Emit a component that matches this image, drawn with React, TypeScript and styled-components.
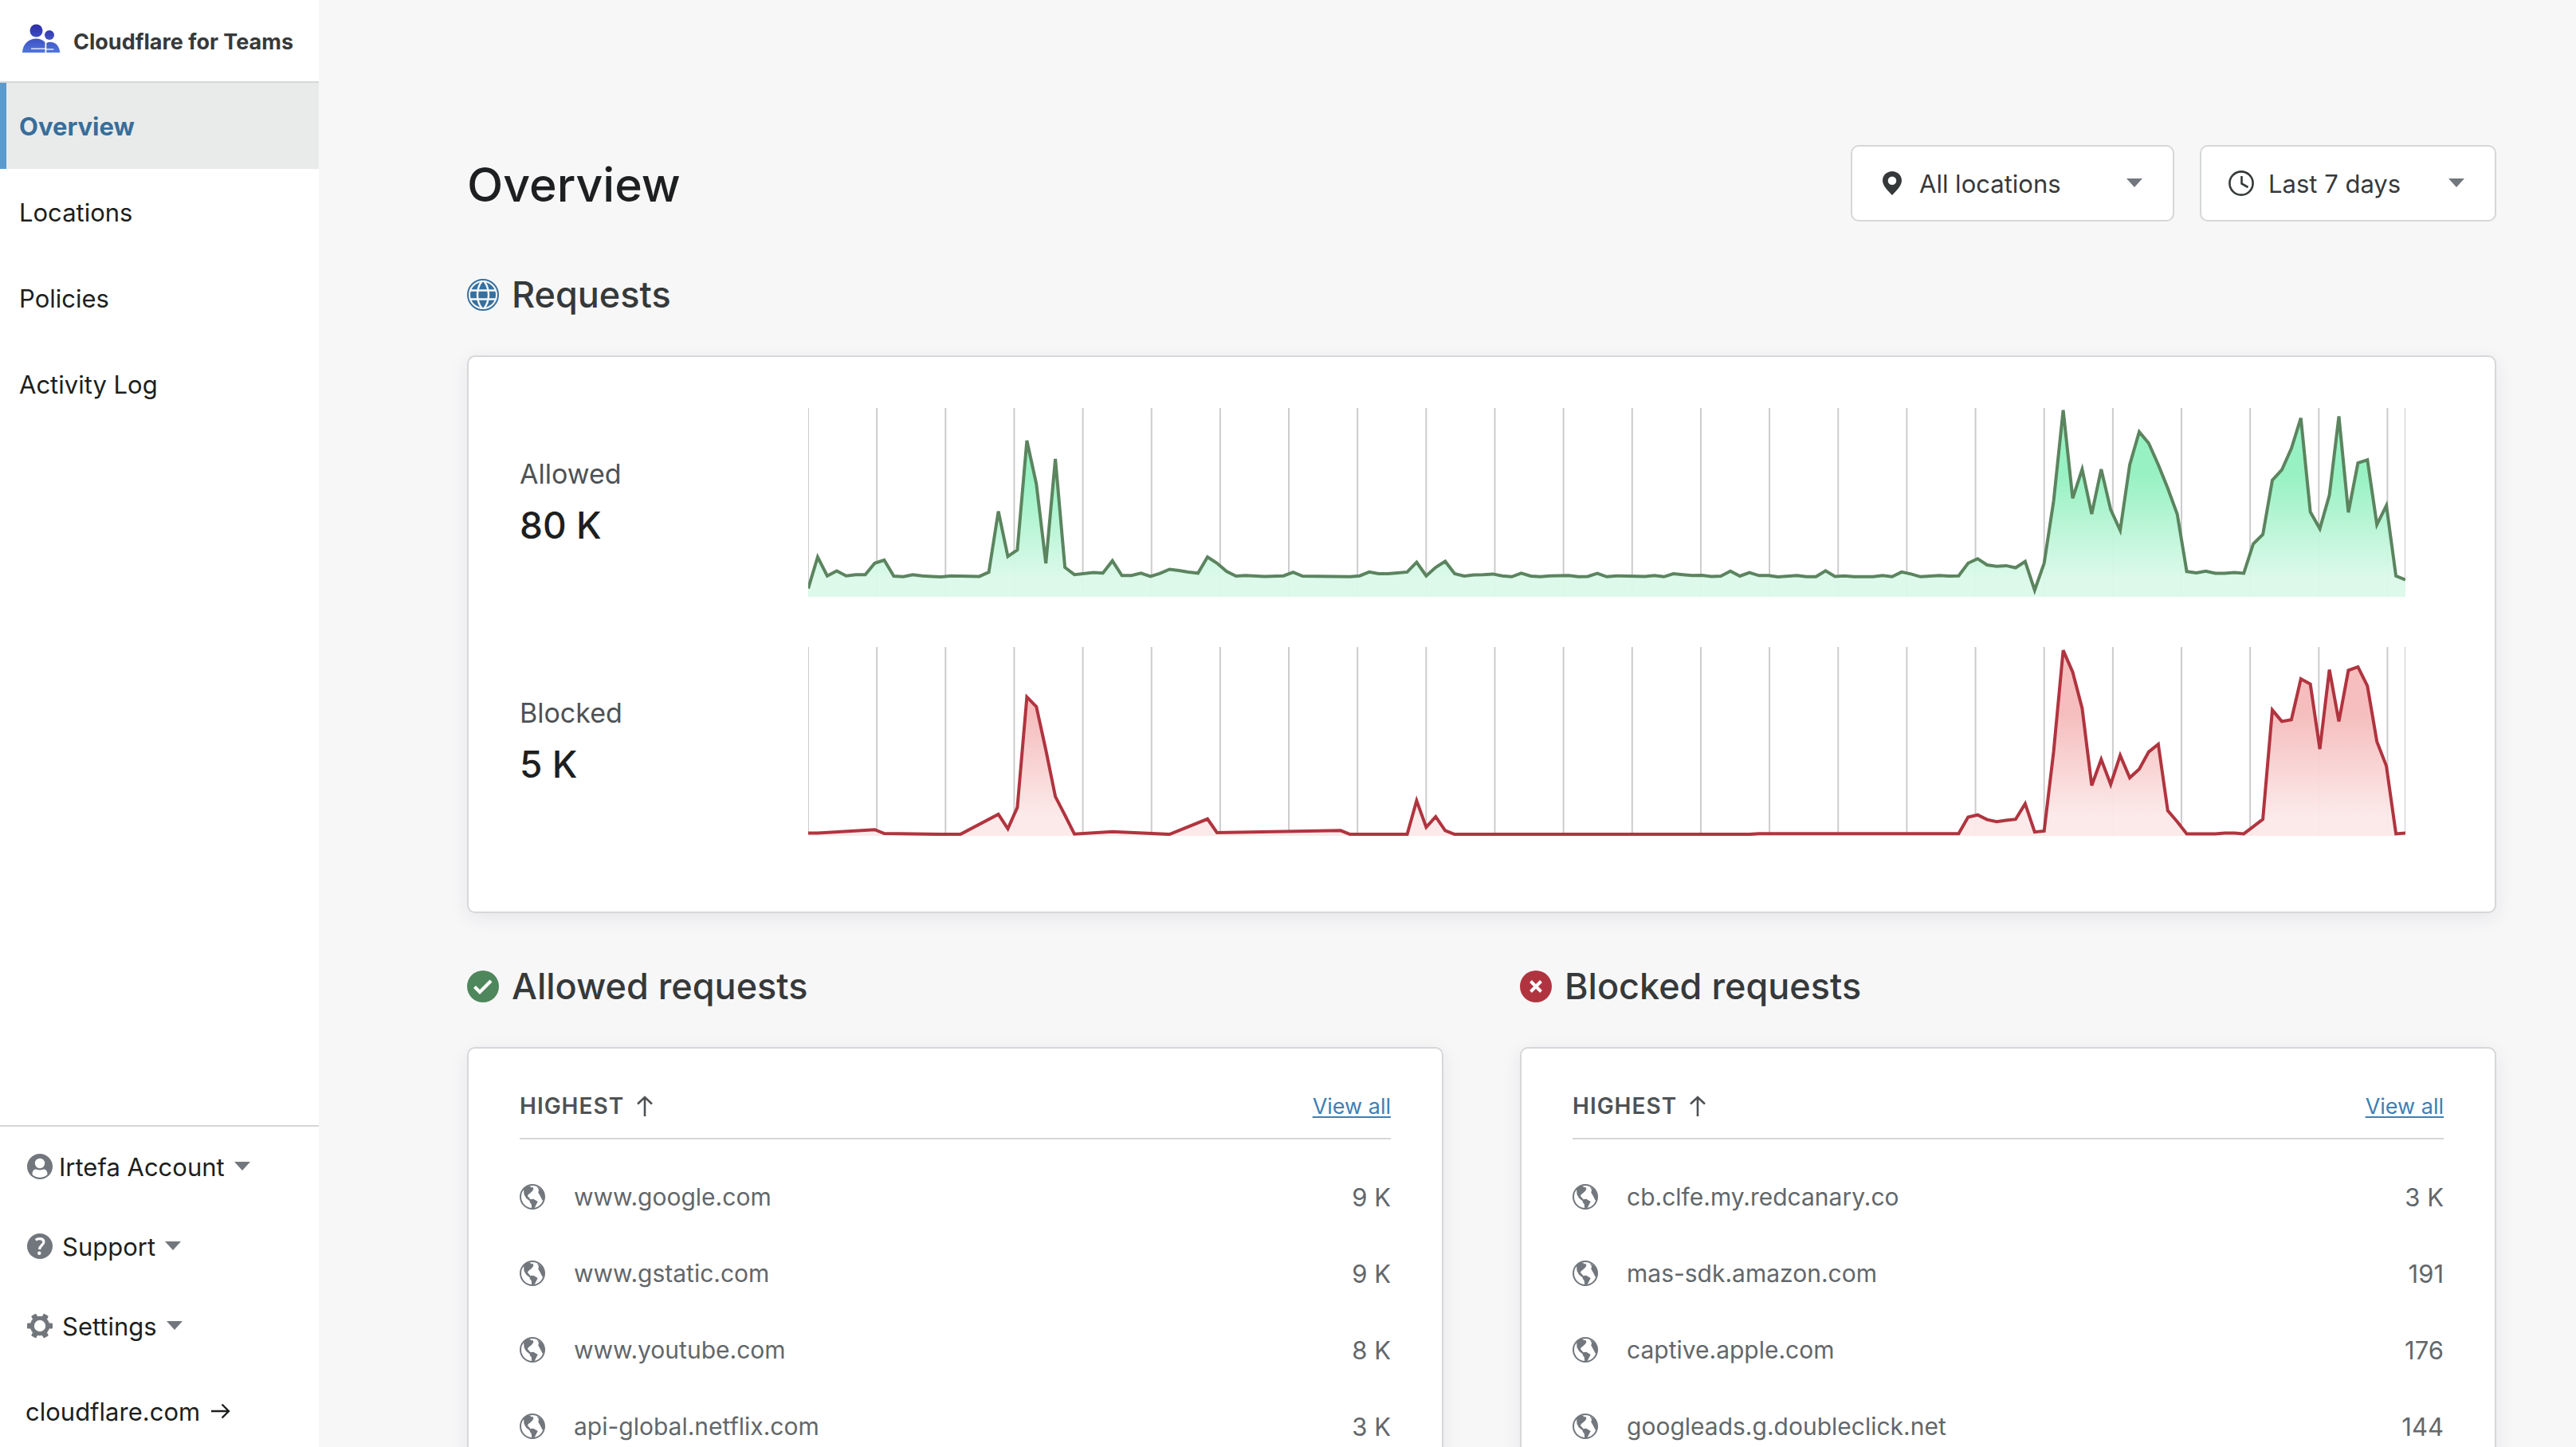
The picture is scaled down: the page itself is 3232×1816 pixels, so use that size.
import React from 'react';
import styled, { createGlobalStyle, css } from 'styled-components';

const color = {
  page: '#f7f7f8',
  panel: '#ffffff',
  line: '#d5d7d8',
  ink: '#1d1f20',
  heading: '#36393a',
  label: '#4e5255',
  muted: '#62676a',
  icon: '#72777d',
  link: '#3e7fb3',
  active: '#386e9b',
  activeBar: '#5b9acd',
  activeBg: '#e9ebea',
  globe: '#36709f',
  green: '#4f875c',
  red: '#b0343f',
};

const GlobalStyle = createGlobalStyle`
  *, *::before, *::after { box-sizing: border-box; }
  body {
    margin: 0;
    background: ${color.page};
    color: ${color.ink};
    font-family: Inter, "Noto Sans", "Liberation Sans", sans-serif;
    font-size: 31px;
  }
  button, select { font: inherit; color: inherit; }
`;

/* ---------- shell ---------- */

const Shell = styled.div`
  display: flex;
  height: 100vh;
  overflow: hidden;
`;

const Sidebar = styled.aside`
  display: flex;
  flex-direction: column;
  flex: 0 0 400px;
  background: ${color.panel};
`;

const Brand = styled.a`
  display: flex;
  align-items: center;
  gap: 16px;
  height: 104px;
  padding: 2px 28px 0;
  border-bottom: 2px solid ${color.line};
  color: ${color.heading};
  font-size: 27px;
  font-weight: 700;
  text-decoration: none;
  white-space: nowrap;
`;

const Nav = styled.nav`
  display: flex;
  flex-direction: column;
  flex: 1;
`;

const NavLink = styled.a<{ $active?: boolean }>`
  display: flex;
  align-items: center;
  height: 108px;
  padding: 0 16px;
  border-left: 8px solid transparent;
  color: ${color.ink};
  text-decoration: none;
  ${(p) =>
    p.$active &&
    css`
      background: ${color.activeBg};
      border-left-color: ${color.activeBar};
      color: ${color.active};
      font-weight: 700;
    `}
`;

const SidebarFooter = styled.div`
  display: flex;
  flex-direction: column;
  border-top: 2px solid ${color.line};
`;

const MenuButton = styled.button`
  display: flex;
  align-items: center;
  height: 100px;
  padding: 0 34px;
  border: 0;
  background: none;
  text-align: left;
`;

const MenuLabel = styled.span<{ $tight?: boolean }>`
  margin: 0 12px 0 ${(p) => (p.$tight ? 8 : 12)}px;
`;

const SiteLink = styled.a`
  display: flex;
  align-items: center;
  gap: 14px;
  height: 102px;
  padding: 12px 32px 0;
  color: ${color.ink};
  text-decoration: none;
`;

const Main = styled.main`
  flex: 1;
  min-width: 0;
  padding: 182px 100px 64px 186px;
  overflow-y: auto;
  scrollbar-width: none;
`;

/* ---------- page header ---------- */

const PageHeader = styled.header`
  display: flex;
  align-items: center;
  justify-content: space-between;
`;

const PageTitle = styled.h1`
  margin: 0;
  padding-top: 4px;
  font-size: 59px;
  line-height: 72px;
  font-weight: 500;
`;

const Filters = styled.div`
  display: flex;
  gap: 32px;
`;

const Filter = styled.label<{ $width: number }>`
  display: flex;
  align-items: center;
  gap: 18px;
  width: ${(p) => p.$width}px;
  height: 96px;
  padding: 0 38px 0 34px;
  background: ${color.panel};
  border: 2px solid ${color.line};
  border-radius: 10px;
  color: ${color.heading};
`;

const Select = styled.select`
  flex: 1;
  min-width: 0;
  padding: 0;
  border: 0;
  background: none;
  appearance: none;
`;

/* ---------- sections ---------- */

const SectionTitle = styled.h2`
  display: flex;
  align-items: center;
  gap: 16px;
  margin: 64px 0 48px;
  color: ${color.heading};
  font-size: 45px;
  line-height: 56px;
  font-weight: 500;
`;

const Card = styled.div`
  background: ${color.panel};
  border: 2px solid ${color.line};
  border-radius: 10px;
  box-shadow: 0 6px 24px rgba(40, 44, 70, 0.08);
`;

const ChartCard = styled(Card)`
  display: grid;
  gap: 63px;
  padding: 64px 112px 95px 64px;
`;

const ChartRow = styled.div`
  display: grid;
  grid-template-columns: 362px 1fr;
  align-items: center;
`;

const Metric = styled.dl`
  margin: 0;
`;

const MetricLabel = styled.dt`
  color: ${color.label};
  font-size: 34px;
  line-height: 56px;
`;

const MetricValue = styled.dd`
  margin: 0;
  font-size: 46px;
  line-height: 72px;
  font-weight: 500;
`;

const ChartSvg = styled.svg`
  display: block;
  width: 100%;
  height: 237px;
`;

const Columns = styled.div`
  display: grid;
  grid-template-columns: 1fr 1fr;
  gap: 96px;
`;

const ListCard = styled(Card)`
  padding: 32px 64px 40px;
`;

const Table = styled.table`
  width: 100%;
  border-collapse: separate;
  border-spacing: 0;
  color: ${color.muted};

  tbody::before {
    content: '';
    display: block;
    height: 24px;
  }
`;

const HeadCell = styled.th<{ $end?: boolean }>`
  height: 82px;
  padding: 0 0 ${(p) => (p.$end ? 4 : 0)}px;
  border-bottom: 2px solid ${color.line};
  text-align: ${(p) => (p.$end ? 'right' : 'left')};
  font-weight: 400;
`;

const SortButton = styled.button`
  display: flex;
  align-items: center;
  gap: 16px;
  padding: 0;
  border: 0;
  background: none;
  color: ${color.label};
  font-size: 28px;
  font-weight: 600;
  letter-spacing: 1px;
`;

const ViewAll = styled.a`
  color: ${color.link};
  font-size: 27px;
  text-decoration: underline;
  text-decoration-thickness: 2px;
  text-underline-offset: 3px;
`;

const Cell = styled.td<{ $end?: boolean }>`
  height: 96px;
  padding: 0;
  text-align: ${(p) => (p.$end ? 'right' : 'left')};
`;

const Domain = styled.span`
  display: flex;
  align-items: center;
  gap: 36px;
  font-size: 30px;
`;

/* ---------- icons ---------- */

const Icon = styled.svg`
  display: block;
  flex: none;
`;

const Caret = () => (
  <Icon width="20" height="12" viewBox="0 0 20 12" aria-hidden="true">
    <path d="M0 0h20L10 11z" fill={color.icon} />
  </Icon>
);

const TeamsLogo = () => (
  <Icon width="48" height="44" viewBox="0 0 48 44" aria-hidden="true">
    <defs>
      <linearGradient id="teams" x1="0" y1="0" x2="0" y2="36" gradientUnits="userSpaceOnUse">
        <stop offset="0" stopColor="#2d2aa5" />
        <stop offset="1" stopColor="#4f76e0" />
      </linearGradient>
    </defs>
    <g fill="url(#teams)">
      <circle cx="17.500" cy="8.500" r="8" />
      <circle cx="34" cy="14" r="6" />
      <path d="M0 36C.5 25.500 8 18.500 17.500 18.500c4.500 0 8 1.500 11 4.500v7.500H11v1.200h17.500V36z" />
      <path d="M30.300 24c1.500-.8 3-1.200 4.500-1.200C42 22.800 46.500 28 47.300 36h-17v-3.500h9v-1.200h-9z" />
    </g>
  </Icon>
);

const UserIcon = () => (
  <Icon width="32" height="32" viewBox="0 0 32 32" aria-hidden="true">
    <circle cx="16" cy="16" r="16" fill={color.icon} />
    <circle cx="16" cy="12" r="6.200" fill="#fff" />
    <path d="M6.500 26c0-4.500 2-6.500 4.500-6.500 1.600 0 2.500 1 5 1s3.400-1 5-1c2.500 0 4.500 2 4.500 6.500-2.500 2.600-5.500 3.800-9.500 3.800S9 28.600 6.500 26z" fill="#fff" />
  </Icon>
);

const HelpIcon = () => (
  <Icon width="32" height="32" viewBox="0 0 32 32" aria-hidden="true">
    <circle cx="16" cy="16" r="16" fill={color.icon} />
    <path d="M10.800 8.200c1.400-1.100 3-1.600 4.900-1.600 3.200 0 5.200 1.500 5.200 4.100 0 4.100-5.300 4.200-5.300 9.300" fill="none" stroke="#fff" strokeWidth="3.200" />
    <circle cx="15.300" cy="24.800" r="2.200" fill="#fff" />
  </Icon>
);

const GearIcon = () => (
  <Icon width="32" height="32" viewBox="0 0 32 32" aria-hidden="true">
    <g fill={color.icon}>
      {[0, 60, 120].map((angle) => (
        <rect key={angle} x="0" y="12.500" width="32" height="7" rx="1.200" transform={`rotate(${angle} 16 16)`} />
      ))}
      <circle cx="16" cy="16" r="12.200" />
    </g>
    <circle cx="16" cy="16" r="7.200" fill="#fff" />
  </Icon>
);

const ArrowRight = () => (
  <Icon width="24" height="20" viewBox="0 0 24 20" fill="none" stroke={color.ink} strokeWidth="2.400" aria-hidden="true">
    <path d="M0 10h22M13.500 1.500L22 10l-8.500 8.500" />
  </Icon>
);

const ArrowUp = () => (
  <Icon width="20" height="26" viewBox="0 0 20 26" fill="none" stroke={color.label} strokeWidth="2.600" aria-hidden="true">
    <path d="M10 26V2M1 10.500L10 2l9 8.500" />
  </Icon>
);

const PinIcon = () => (
  <Icon width="32" height="32" viewBox="0 0 32 32" aria-hidden="true">
    <path
      fill={color.heading}
      fillRule="evenodd"
      d="M16 1C9.300 1 4 6 4 12.800 4 19 10.500 25 16 31c5.500-6 12-12 12-18.200C28 6 22.700 1 16 1zm0 6.500a5.300 5.300 0 1 1 0 10.600 5.300 5.300 0 0 1 0-10.600z"
    />
  </Icon>
);

const ClockIcon = () => (
  <Icon width="32" height="32" viewBox="0 0 32 32" fill="none" stroke={color.heading} strokeWidth="2.600" aria-hidden="true">
    <circle cx="16" cy="16" r="14.600" />
    <path d="M16.500 7v9.500l8 4.500" />
  </Icon>
);

const GlobeIcon = () => (
  <Icon width="40" height="40" viewBox="0 0 40 40" fill="none" aria-hidden="true">
    <circle cx="20" cy="20" r="19" stroke={color.globe} strokeWidth="2" />
    <circle cx="20" cy="20" r="16" fill={color.globe} />
    <g stroke={color.page} strokeWidth="2.400">
      <path d="M3 14.500h34M3 25.500h34" />
      <path d="M19 2.500C11 12 11 28 19 37.500M21 2.500c8 9.500 8 25.500 0 35" />
    </g>
  </Icon>
);

const CheckIcon = () => (
  <Icon width="40" height="40" viewBox="0 0 40 40" fill="none" aria-hidden="true">
    <circle cx="20" cy="20" r="20" fill={color.green} />
    <path d="M9.500 20.500l6.500 6.500L30 13" stroke="#fff" strokeWidth="4.200" />
  </Icon>
);

const CrossIcon = () => (
  <Icon width="40" height="40" viewBox="0 0 40 40" fill="none" aria-hidden="true">
    <circle cx="20" cy="20" r="20" fill={color.red} />
    <path d="M13.500 13.500l13 13M26.500 13.500l-13 13" stroke="#fff" strokeWidth="4" />
  </Icon>
);

const EarthIcon = () => (
  <Icon width="32" height="32" viewBox="0 0 32 32" aria-hidden="true">
    <circle cx="16" cy="16" r="15" fill="none" stroke={color.icon} strokeWidth="2" />
    <g fill={color.icon}>
      <path d="M5 6l3.700-3.500L13.300 2.500l1 2 1.700-1 1.500 2.500L16 8.700l-2.700 2.600-2.600 2-.7 2 2 2 2 2.700-1.500 1.200L8 17.500 5.500 13z" />
      <path d="M12.700 19.300l4.600-.6 5.400 3.300-2 4-2.700 5h-2.700l-.6-5.700-2-2.600z" />
      <path d="M21.500 3L28 7.500 31 13l.3 6-2.600 1.700-2-4-1.400-2.700-2-3.300.7-3.400z" />
    </g>
  </Icon>
);

/* ---------- charts ---------- */

type Point = [hour: number, y: number];

const HOURS = 168;
const CHART_W = 2004;
const CHART_H = 237;

const allowedSeries: Point[] = [
  [0, 226.6], [1, 187], [2, 210.7], [3, 204.4], [4, 210.7], [5, 209.2], [6, 209.2], [7, 194.8], [8, 191],
  [9, 211], [10, 211.8], [11, 209.2], [12, 210.7], [13, 211.4], [14, 212.1], [15, 210.7], [18, 211.4],
  [19, 206.2], [20, 129.7], [21, 186.3], [22, 178.1], [23, 41], [24, 95.6], [25, 195], [26, 64], [27, 200],
  [28, 209.2], [30, 206.6], [31, 207.3], [32, 191.8], [33, 210.3], [34, 210.3], [35, 207.3], [36, 211.4],
  [37, 207.7], [38, 202.5], [39, 204], [40, 205.9], [41, 207.3], [42, 187], [43, 194.8], [44, 205], [45, 211],
  [46, 210.3], [48, 211.4], [50, 210.7], [51, 206.2], [52, 211], [57, 211.8], [58, 210.7], [59, 205.9],
  [60, 208], [61, 208], [62, 207], [63, 205.9], [64, 193.7], [65, 210.7], [66, 200], [67, 192.5], [68, 208],
  [69, 211], [70, 209.6], [71, 209.2], [72, 208.4], [73, 210.7], [74, 211.8], [75, 207.3], [76, 211],
  [77, 211.8], [78, 210.7], [80, 210.3], [81, 211.8], [82, 211.4], [83, 207.7], [84, 211.8], [85, 210.7],
  [88, 211.4], [89, 210.3], [90, 211.8], [91, 208], [92, 209.2], [93, 210.3], [94, 210], [95, 211.4], [96, 211],
  [97, 204.8], [98, 211], [99, 206.6], [100, 210.3], [101, 210.3], [102, 212.1], [104, 210.3], [105, 211.8],
  [106, 211.8], [107, 204.4], [108, 211.4], [109, 210.7], [110, 211.8], [112, 211.8], [113, 210.3],
  [114, 211.8], [115, 205.9], [116, 208.4], [117, 211.8], [119, 210.3], [120, 211], [121, 210.7],
  [122, 194.8], [123, 189.2], [124, 197], [125, 198.7], [126, 197.9], [127, 200.5], [128, 192.7], [129, 228.7],
  [130, 194.8], [131, 116.8], [132, 2.7], [133, 113.3], [134, 76.9], [135, 133.2], [136, 76.9], [137, 127.6],
  [138, 153.6], [139, 71.2], [140, 30], [141, 44.3], [142, 71.2], [143, 100.7], [144, 133.2], [145, 205.2],
  [146, 207], [147, 204.8], [148, 207.4], [149, 207.4], [150, 206.5], [151, 207.4], [152, 170.5], [153, 158.8],
  [154, 90.7], [155, 77.7], [156, 50.9], [157, 12.7], [158, 130.6], [159, 151.5], [160, 109.4], [161, 10.5],
  [162, 131], [163, 69], [164, 65.2], [165, 146.3], [166, 122.4], [167, 210.9], [168, 215.6],
];

const blockedSeries: Point[] = [
  [0, 233.6], [1, 233.6], [7, 229.2], [8, 234], [14, 235.1], [16, 235.1], [20, 209.9], [21, 228], [22, 201.4],
  [23, 62.7], [24, 74.9], [25, 129.3], [26, 187.7], [27, 211], [28, 234.7], [32, 231.7], [38, 235.1],
  [42, 215.8], [43, 232.9], [56, 230.3], [57, 235.1], [63, 235.1], [64, 192.9], [65, 226.2], [66, 212.9],
  [67, 230.3], [68, 235.1], [99, 235.1], [100, 234.3], [121, 234.3], [122, 213.6], [123, 210.7], [124, 216.6],
  [125, 219.2], [126, 217.5], [127, 216.2], [128, 196.6], [129, 232.2], [130, 230.9], [131, 131.2], [132, 4.1],
  [133, 31.4], [134, 77], [135, 173.7], [136, 141.1], [137, 172.4], [138, 135.9], [139, 164.1], [140, 153.3],
  [141, 131.6], [142, 122], [143, 205.3], [144, 219.2], [145, 234.4], [148, 234.4], [149, 233.5], [150, 233.5],
  [151, 234.4], [152, 225.3], [153, 216.2], [154, 79.1], [155, 93.4], [156, 91.3], [157, 40.1], [158, 46.6],
  [159, 128.1], [160, 28.4], [161, 93.4], [162, 29.3], [163, 24.9], [164, 48.8], [165, 118.6], [166, 149.4],
  [167, 234.4], [168, 233.5],
];

const gridLines = [...Array.from({ length: 24 }, (_, i) => i * 86.15), CHART_W];

interface AreaChartProps {
  id: string;
  title: string;
  series: Point[];
  stroke: string;
  from: string;
  to: string;
}

function AreaChart({ id, title, series, stroke, from, to }: AreaChartProps) {
  const points = series.map(([hour, y]) => `${((hour * CHART_W) / HOURS).toFixed(1)},${y}`).join(' ');
  return (
    <ChartSvg viewBox={`0 0 ${CHART_W} ${CHART_H}`} preserveAspectRatio="none" role="img" aria-label={title}>
      <defs>
        <linearGradient id={id} x1="0" y1="0" x2="0" y2={CHART_H} gradientUnits="userSpaceOnUse">
          <stop offset="0.35" stopColor={from} />
          <stop offset="0.9" stopColor={to} />
        </linearGradient>
      </defs>
      {gridLines.map((x) => (
        <line key={x} x1={x} x2={x} y1="0" y2={CHART_H} stroke="#cccccc" strokeWidth="2" />
      ))}
      <polygon points={`0,${CHART_H} ${points} ${CHART_W},${CHART_H}`} fill={`url(#${id})`} fillOpacity="0.96" />
      <polyline points={points} fill="none" stroke={stroke} strokeWidth="4" />
    </ChartSvg>
  );
}

/* ---------- content ---------- */

interface Row {
  domain: string;
  count: string;
}

const allowedRows: Row[] = [
  { domain: 'www.google.com', count: '9 K' },
  { domain: 'www.gstatic.com', count: '9 K' },
  { domain: 'www.youtube.com', count: '8 K' },
  { domain: 'api-global.netflix.com', count: '3 K' },
];

const blockedRows: Row[] = [
  { domain: 'cb.clfe.my.redcanary.co', count: '3 K' },
  { domain: 'mas-sdk.amazon.com', count: '191' },
  { domain: 'captive.apple.com', count: '176' },
  { domain: 'googleads.g.doubleclick.net', count: '144' },
];

interface RequestListProps {
  title: string;
  icon: React.ReactNode;
  rows: Row[];
}

function RequestList({ title, icon, rows }: RequestListProps) {
  return (
    <section>
      <SectionTitle>
        {icon}
        {title}
      </SectionTitle>
      <ListCard>
        <Table>
          <thead>
            <tr>
              <HeadCell scope="col">
                <SortButton type="button">
                  HIGHEST
                  <ArrowUp />
                </SortButton>
              </HeadCell>
              <HeadCell scope="col" $end>
                <ViewAll href="#all">View all</ViewAll>
              </HeadCell>
            </tr>
          </thead>
          <tbody>
            {rows.map((row) => (
              <tr key={row.domain}>
                <Cell>
                  <Domain>
                    <EarthIcon />
                    {row.domain}
                  </Domain>
                </Cell>
                <Cell $end>{row.count}</Cell>
              </tr>
            ))}
          </tbody>
        </Table>
      </ListCard>
    </section>
  );
}

export default function App() {
  return (
    <>
      <GlobalStyle />
      <Shell>
        <Sidebar>
          <Brand href="#home">
            <TeamsLogo />
            Cloudflare for Teams
          </Brand>
          <Nav>
            <NavLink href="#overview" $active aria-current="page">Overview</NavLink>
            <NavLink href="#locations">Locations</NavLink>
            <NavLink href="#policies">Policies</NavLink>
            <NavLink href="#activity">Activity Log</NavLink>
          </Nav>
          <SidebarFooter>
            <MenuButton type="button">
              <UserIcon />
              <MenuLabel $tight>Irtefa Account</MenuLabel>
              <Caret />
            </MenuButton>
            <MenuButton type="button">
              <HelpIcon />
              <MenuLabel>Support</MenuLabel>
              <Caret />
            </MenuButton>
            <MenuButton type="button">
              <GearIcon />
              <MenuLabel>Settings</MenuLabel>
              <Caret />
            </MenuButton>
            <SiteLink href="#site">
              cloudflare.com
              <ArrowRight />
            </SiteLink>
          </SidebarFooter>
        </Sidebar>

        <Main>
          <PageHeader>
            <PageTitle>Overview</PageTitle>
            <Filters>
              <Filter $width={406}>
                <PinIcon />
                <Select aria-label="Location" defaultValue="all">
                  <option value="all">All locations</option>
                </Select>
                <Caret />
              </Filter>
              <Filter $width={372}>
                <ClockIcon />
                <Select aria-label="Time range" defaultValue="7">
                  <option value="7">Last 7 days</option>
                </Select>
                <Caret />
              </Filter>
            </Filters>
          </PageHeader>

          <section>
            <SectionTitle>
              <GlobeIcon />
              Requests
            </SectionTitle>
            <ChartCard>
              <ChartRow>
                <Metric>
                  <MetricLabel>Allowed</MetricLabel>
                  <MetricValue>80 K</MetricValue>
                </Metric>
                <AreaChart id="allowed-fill" title="Allowed requests per hour" series={allowedSeries} stroke="#5b845f" from="#93f1c0" to="#dcf9ea" />
              </ChartRow>
              <ChartRow>
                <Metric>
                  <MetricLabel>Blocked</MetricLabel>
                  <MetricValue>5 K</MetricValue>
                </Metric>
                <AreaChart id="blocked-fill" title="Blocked requests per hour" series={blockedSeries} stroke={color.red} from="#f5bbbb" to="#fce9e9" />
              </ChartRow>
            </ChartCard>
          </section>

          <Columns>
            <RequestList title="Allowed requests" icon={<CheckIcon />} rows={allowedRows} />
            <RequestList title="Blocked requests" icon={<CrossIcon />} rows={blockedRows} />
          </Columns>
        </Main>
      </Shell>
    </>
  );
}
